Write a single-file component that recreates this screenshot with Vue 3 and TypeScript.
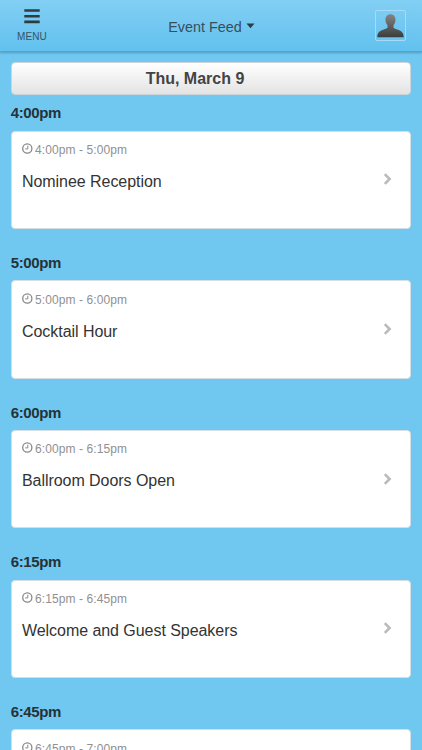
<script setup lang="ts">
interface EventItem {
  start: string
  end: string
  title: string
}

const events: EventItem[] = [
  { start: '4:00pm', end: '5:00pm', title: 'Nominee Reception' },
  { start: '5:00pm', end: '6:00pm', title: 'Cocktail Hour' },
  { start: '6:00pm', end: '6:15pm', title: 'Ballroom Doors Open' },
  { start: '6:15pm', end: '6:45pm', title: 'Welcome and Guest Speakers' },
  { start: '6:45pm', end: '7:00pm', title: '' },
]
</script>

<template>
  <div class="screen">
    <header class="topbar">
      <div class="menu">
        <svg class="bars" width="18" height="16" viewBox="0 0 18 16">
          <path d="M1.300 2.500h15.400M1.300 8.200h15.400M1.300 13.900h15.400" />
        </svg>
        <span class="menu-label">MENU</span>
      </div>
      <div class="feed">
        <span>Event Feed</span>
        <svg class="caret" width="9" height="6" viewBox="0 0 9 6"><path d="M.5.4h8L4.500 5.200z" /></svg>
      </div>
      <div class="avatar">
        <svg width="27" height="25" viewBox="0 0 27 25">
          <defs>
            <linearGradient id="person" x1="0" y1="0" x2="0" y2="1">
              <stop offset="0" stop-color="#858585" />
              <stop offset="1" stop-color="#3c3c3c" />
            </linearGradient>
          </defs>
          <path
            fill="url(#person)"
            d="M13.500 1.200c-3 0-5 2.200-5 5.400 0 2.300.8 4.300 2 5.700v2.200c0 .8-1.500 1.300-4.400 2.200C2 18 .4 20 .3 24.200h26.400c-.1-4.200-1.700-6.200-5.800-7.500-2.900-.9-4.400-1.400-4.400-2.200v-2.200c1.200-1.400 2-3.400 2-5.700 0-3.200-2-5.400-5-5.400z"
          />
        </svg>
      </div>
    </header>

    <main class="content">
      <div class="date">Thu, March 9</div>
      <section v-for="event in events" :key="event.start" class="slot">
        <h2 class="slot-time">{{ event.start }}</h2>
        <article class="card">
          <div class="info">
            <div class="range">
              <svg class="clock" width="11" height="11" viewBox="0 0 11 11">
                <circle cx="5.300" cy="5.500" r="4.600" />
                <path d="M5.800 2.700v3.200H3.200" />
              </svg>
              <span>{{ event.start }} - {{ event.end }}</span>
            </div>
            <div class="title">{{ event.title }}</div>
          </div>
          <svg class="chevron" width="9" height="12" viewBox="0 0 9 12"><path d="M1.800 1.200 6.600 6 1.800 10.800" /></svg>
        </article>
      </section>
    </main>
  </div>
</template>

<style>
body {
  background: #70c7f0;
}
</style>

<style scoped>
.screen {
  box-sizing: border-box;
  height: 750px;
  overflow: hidden;
  background: #70c7f0;
  font-family: 'Liberation Sans', Arial, sans-serif;
  color: #333;
}

.topbar {
  box-sizing: border-box;
  display: grid;
  grid-template-columns: 64px 1fr 64px;
  height: 52px;
  background: linear-gradient(#82cff4, #62c1ee);
  border-bottom: 1px solid #53a5cd;
  box-shadow: 0 1px 2px rgba(35, 90, 120, 0.4);
}

.menu {
  display: flex;
  flex-direction: column;
  align-items: center;
  padding-top: 8px;
}

.bars {
  display: block;
}

.bars path {
  stroke: #303b40;
  stroke-width: 2.600;
}

.menu-label {
  margin-top: 7px;
  font-size: 10px;
  letter-spacing: 0.1px;
  line-height: 12px;
  color: #35535f;
}

.feed {
  display: flex;
  justify-content: center;
  gap: 4px;
  padding: 18px 0 0 1px;
  font-size: 14.400px;
  line-height: 18px;
  color: #3a4e58;
}

.caret {
  margin-top: 5px;
  fill: #303b40;
}

.avatar {
  box-sizing: border-box;
  width: 31px;
  height: 31px;
  margin: 10px 0 0 17px;
  padding: 2px 1px;
  border: 1px solid #a5dbf6;
  border-radius: 2px;
}

.avatar svg {
  display: block;
}

.content {
  padding: 9.7px 10.7px 0;
}

.date {
  box-sizing: border-box;
  height: 33.3px;
  padding-right: 32px;
  border: 1px solid #cbd5da;
  border-radius: 4px;
  background: linear-gradient(#fff, #e3e3e3);
  font-size: 16px;
  font-weight: bold;
  line-height: 32px;
  text-align: center;
  color: #444;
}

.slot {
  height: 149.67px;
}

.slot-time {
  box-sizing: border-box;
  height: 35.7px;
  margin: 0;
  padding-top: 8.4px;
  font-size: 15px;
  letter-spacing: -0.35px;
  line-height: 20px;
  color: #253238;
}

.card {
  box-sizing: border-box;
  display: flex;
  justify-content: space-between;
  height: 98.500px;
  padding: 10.3px 18.300px 0 10.300px;
  border: 1px solid #d3dfe5;
  border-radius: 4px;
  background: #fff;
}

.range {
  display: flex;
  gap: 2px;
  font-size: 12px;
  letter-spacing: 0.1px;
  line-height: 16px;
  color: #909090;
}

.clock {
  margin-top: 1px;
  fill: none;
  stroke: #888;
  stroke-width: 1.300;
}

.clock path {
  stroke-width: 1;
}

.title {
  margin-top: 14px;
  font-size: 16px;
  letter-spacing: -0.05px;
  line-height: 20px;
  color: #333;
}

.chevron {
  margin-top: 31.500px;
  fill: none;
  stroke: #bbb;
  stroke-width: 2.600;
}
</style>
